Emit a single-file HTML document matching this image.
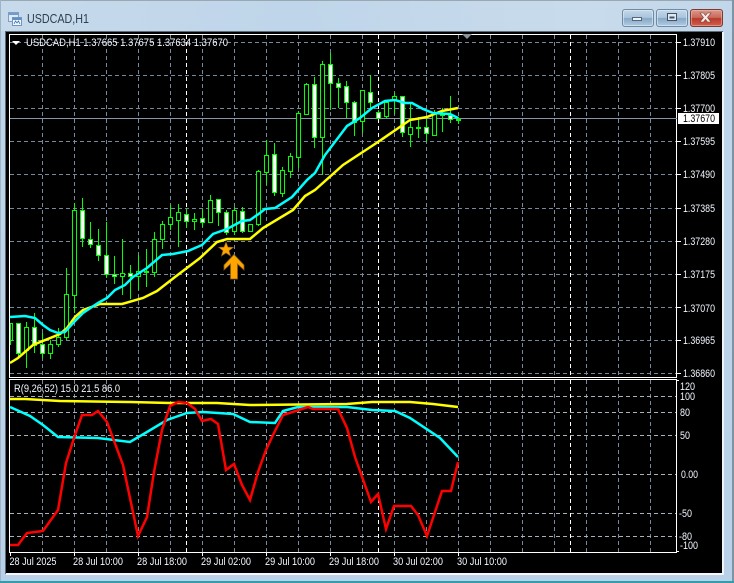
<!DOCTYPE html>
<html>
<head>
<meta charset="utf-8">
<style>
html,body{margin:0;padding:0;background:#b8d1e8;width:734px;height:583px;overflow:hidden}
svg{display:block}
text{font-family:"Liberation Sans",sans-serif;fill:#f2f7ff;font-size:10.8px}
</style>
</head>
<body>
<svg width="734" height="583" viewBox="0 0 734 583" xmlns="http://www.w3.org/2000/svg">
<defs>
<linearGradient id="tb" x1="0" y1="0" x2="0" y2="1"><stop offset="0" stop-color="#bfd5e9"/><stop offset="1" stop-color="#b9d1e8"/></linearGradient>
<linearGradient id="tb2" x1="0" y1="0" x2="1" y2="0"><stop offset="0" stop-color="#fff" stop-opacity=".12"/><stop offset=".4" stop-color="#fff" stop-opacity="0"/><stop offset=".8" stop-color="#fff" stop-opacity=".15"/><stop offset="1" stop-color="#fff" stop-opacity=".03"/></linearGradient>
<linearGradient id="bn" x1="0" y1="0" x2="0" y2="1"><stop offset="0" stop-color="#c6d9ea"/><stop offset=".48" stop-color="#a9c4dc"/><stop offset=".52" stop-color="#86a8c6"/><stop offset="1" stop-color="#b3cde3"/></linearGradient>
<linearGradient id="bc" x1="0" y1="0" x2="0" y2="1"><stop offset="0" stop-color="#dc9a8c"/><stop offset=".48" stop-color="#c9685a"/><stop offset=".52" stop-color="#b83a2a"/><stop offset="1" stop-color="#d4604e"/></linearGradient>
</defs>

<!-- window frame -->
<rect width="734" height="583" fill="url(#tb)"/>
<rect width="734" height="31" fill="url(#tb2)"/>
<rect x="0" y="0" width="734" height="1" fill="#9aa8b2"/>
<rect x="0" y="0" width="1" height="583" fill="#9fb4c5"/>
<rect x="732" y="0" width="2" height="583" fill="#7d94a6"/>
<rect x="0" y="581" width="734" height="2" fill="#2f9fb0"/>

<!-- title icon -->
<g shape-rendering="crispEdges">
<rect x="8.5" y="12.5" width="10" height="9" fill="#dfeaf6" stroke="#7e9fc4"/>
<rect x="9" y="13" width="9" height="2" fill="#6f9bd0"/>
<rect x="12.5" y="17.5" width="9" height="8" fill="#f3f8fd" stroke="#6f95c0"/>
<rect x="13" y="18" width="8" height="2" fill="#5f90cc"/>
</g>
<path d="M14 24l1.5-3 1.5 2 1.5-2 1.5 3" fill="none" stroke="#3a6ea8" stroke-width=".8"/>
<text x="27" y="23" textLength="62" lengthAdjust="spacingAndGlyphs" style="font-size:12.5px;fill:#2c3e50">USDCAD,H1</text>

<!-- window buttons -->
<rect x="622.5" y="9.5" width="31" height="17" rx="2.5" fill="url(#bn)" stroke="#6f8aa3"/>
<rect x="623.5" y="10.5" width="29" height="15" rx="2" fill="none" stroke="#e2edf6" stroke-opacity=".6"/>
<rect x="656.5" y="9.5" width="31" height="17" rx="2.5" fill="url(#bn)" stroke="#6f8aa3"/>
<rect x="657.5" y="10.5" width="29" height="15" rx="2" fill="none" stroke="#e2edf6" stroke-opacity=".6"/>
<rect x="690.5" y="9.5" width="32" height="17" rx="2.5" fill="url(#bc)" stroke="#7c3b32"/>
<rect x="691.5" y="10.5" width="30" height="15" rx="2" fill="none" stroke="#f0c4ba" stroke-opacity=".5"/>
<rect x="632.5" y="17.5" width="9" height="3" fill="#eef3f8" stroke="#55677a" shape-rendering="crispEdges"/>
<rect x="667.5" y="13.5" width="9" height="7" fill="#dfe9f2" stroke="#3f5266" stroke-width="1" shape-rendering="crispEdges"/>
<rect x="669.5" y="16.5" width="5" height="2" fill="#3f5266" shape-rendering="crispEdges"/>
<path d="M700 13h3.5l2 2.5 2-2.5h3.5l-3.5 4.5 3.5 4.5h-3.500l-2-2.500-2 2.500h-3.500l3.500-4.500z" fill="#f2ece9" stroke="#7c3b32" stroke-width=".6"/>

<!-- chart area -->
<rect x="5.5" y="31.5" width="717" height="542" fill="#000" stroke="#5d6b75"/>
<rect x="6" y="573" width="718" height="2" fill="#f3f7fb"/>
<rect x="722" y="32" width="2" height="543" fill="#eef3f8"/>

<!-- grid -->
<g fill="none" stroke="#778899" stroke-width="1" stroke-dasharray="4 3" shape-rendering="crispEdges">
<path d="M10 42.5H676M10 75.5H676M10 108.5H676M10 141.5H676M10 174.5H676M10 208.5H676M10 241.5H676M10 274.5H676M10 307.5H676M10 340.5H676M10 373.5H676"/>
<path d="M42.5 35V377M74.5 35V377M106.5 35V377M138.5 35V377M170.5 35V377M202.5 35V377M234.5 35V377M266.5 35V377M298.5 35V377M330.5 35V377M362.5 35V377M394.5 35V377M426.5 35V377M458.5 35V377M490.5 35V377M522.5 35V377M554.5 35V377M586.5 35V377M618.5 35V377M650.5 35V377"/>
<path d="M42.5 380V552M74.5 380V552M106.5 380V552M138.5 380V552M170.5 380V552M202.5 380V552M234.5 380V552M266.5 380V552M298.5 380V552M330.5 380V552M362.5 380V552M394.5 380V552M426.5 380V552M458.5 380V552M490.5 380V552M522.5 380V552M554.5 380V552M586.5 380V552M618.5 380V552M650.5 380V552"/>
</g>
<g fill="none" stroke="#a8b0b8" stroke-width="1" stroke-dasharray="4 3" shape-rendering="crispEdges">
<path d="M10 396.5H676M10 412.5H676M10 435.5H676M10 474.5H676M10 513.5H676M10 536.5H676"/>
</g>
<g fill="none" stroke="#fff" stroke-width="1" stroke-dasharray="4 3" shape-rendering="crispEdges">
<path d="M186.5 35V377M378.5 35V377M570.5 35V377M186.5 380V552M378.5 380V552M570.5 380V552"/>
</g>

<!-- frames -->
<g fill="none" stroke="#fff" shape-rendering="crispEdges">
<rect x="9.5" y="34.5" width="667" height="343"/>
<rect x="9.5" y="379.5" width="667" height="173"/>
<path d="M677 42.5h4M677 75.5h4M677 108.5h4M677 141.5h4M677 174.5h4M677 208.5h4M677 241.5h4M677 274.5h4M677 307.5h4M677 340.5h4M677 373.5h4"/>
<path d="M677 380.5h2M677 551.5h2"/>
<path d="M10.5 553v3M74.5 553v3M138.5 553v3M202.5 553v3M266.5 553v3M330.5 553v3M394.5 553v3M458.5 553v3"/>
</g>

<!-- price line -->
<rect x="10" y="118" width="667" height="1" fill="#8496a8"/>

<!-- candles: wicks -->
<path fill="none" stroke="#00ff00" stroke-width="1" shape-rendering="crispEdges" d="M10.5 323V345M18.5 323V357M26.5 322V368M34.5 313V353M42.5 333V358M50.5 340V359M58.5 328V347M66.5 268V340M74.5 203V313M82.5 198V247M90.5 222V248M98.5 229V261M106.5 222V278M114.5 256V284M122.5 239V295M130.5 265V299M138.5 255V290M146.5 249V287M154.5 232V277M162.5 221V249M170.5 205V230M178.5 204V247M186.5 209V228M194.5 213V230M202.5 209V227M210.5 195V222M218.5 199V226M226.5 210V235M234.5 207V235M242.5 207V233M250.5 224V231M258.5 170V226M266.5 140V185M274.5 143V196M282.5 167V197M290.5 153V178M298.5 111V168M306.5 83V114M314.5 77V148M322.5 61V175M330.5 53V110M338.5 78V108M346.5 81V118M354.5 101V136M362.5 90V133M370.5 75V108M378.5 110V119M386.5 100V118M394.5 93V114M402.5 96V137M410.5 103V147M418.5 117V138M426.5 118V142M434.5 110V136M442.5 108V132M450.5 96V123M458.5 117V124"/>
<!-- hollow bodies -->
<path fill="#000" stroke="#00ff00" stroke-width="1" shape-rendering="crispEdges" d="M10.5 323.5h2V340.5h-2zM24.5 327.5h4V350.5h-4zM48.5 344.5h4V353.5h-4zM56.5 337.5h4V344.5h-4zM64.5 294.5h4V337.5h-4zM72.5 210.5h4V295.5h-4zM120.5 273.5h4V276.5h-4zM136.5 271.5h4V276.5h-4zM144.5 271.5h4V272.5h-4zM152.5 239.5h4V272.5h-4zM160.5 224.5h4V239.5h-4zM168.5 217.5h4V224.5h-4zM176.5 212.5h4V220.5h-4zM192.5 219.5h4V221.5h-4zM208.5 200.5h4V222.5h-4zM232.5 210.5h4V231.5h-4zM248.5 224.5h4V231.5h-4zM256.5 171.5h4V224.5h-4zM264.5 155.5h4V172.5h-4zM280.5 170.5h4V193.5h-4zM288.5 156.5h4V171.5h-4zM296.5 113.5h4V157.5h-4zM304.5 84.5h4V114.5h-4zM320.5 64.5h4V137.5h-4zM360.5 90.5h4V121.5h-4zM384.5 102.5h4V116.5h-4zM392.5 96.5h4V99.5h-4zM408.5 127.5h4V134.5h-4zM416.5 127.5h4V128.5h-4zM432.5 113.5h4V135.5h-4zM440.5 114.5h4V115.5h-4zM456.5 119.5h4V120.5h-4z"/>
<!-- white bodies -->
<path fill="#fff" stroke="#00ff00" stroke-width="1" shape-rendering="crispEdges" d="M16.5 323.5h4V353.5h-4zM32.5 327.5h4V345.5h-4zM40.5 344.5h4V353.5h-4zM80.5 210.5h4V238.5h-4zM88.5 239.5h4V244.5h-4zM96.5 245.5h4V255.5h-4zM104.5 255.5h4V274.5h-4zM112.5 274.5h4V276.5h-4zM128.5 273.5h4V276.5h-4zM184.5 214.5h4V221.5h-4zM200.5 218.5h4V222.5h-4zM216.5 199.5h4V212.5h-4zM224.5 212.5h4V232.5h-4zM240.5 211.5h4V231.5h-4zM272.5 154.5h4V192.5h-4zM312.5 84.5h4V137.5h-4zM328.5 64.5h4V83.5h-4zM336.5 83.5h4V87.5h-4zM344.5 86.5h4V102.5h-4zM352.5 102.5h4V122.5h-4zM368.5 92.5h4V102.5h-4zM376.5 112.5h4V118.5h-4zM400.5 96.5h4V132.5h-4zM424.5 127.5h4V133.5h-4zM448.5 115.5h4V119.5h-4z"/>

<!-- main MAs -->
<polyline fill="none" stroke="#ffff00" stroke-width="2.5" points="10,363 18,358 33,345 60,334 67,328 75,317 83,310 100,304 122,304 143,298 157,291 175,277 200,258 217,242 227,239 250,239 263,228 288,213 293,210 305,196 315,190 343,165 378,142 410,120 427,117 442,111 458,108"/>
<polyline fill="none" stroke="#00ffff" stroke-width="2.5" points="10,317 25,316 35,318 43,325 50,330 58,333 65,332 74,322 83,313 98,303 107,298 115,290 125,285 133,277 147,268 162,255 173,254 188,251 202,245 213,234 227,229 242,221 250,220 260,213 265,209 275,208 292,197 307,180 315,173 325,155 347,126 360,118 372,108 385,101 395,100 405,103 412,103 423,109 433,113 450,114 458,118"/>

<!-- star + arrow -->
<path d="M226 242l2 5.100 5.400.2-4.300 3.400 1.500 5.300-4.600-3-4.600 3 1.500-5.300-4.300-3.400 5.400-.2z" fill="#ffa500" stroke="#8a5a10" stroke-width=".6"/>
<path d="M234 254.500l10 10.500v5l-6.500-6V279h-7V264l-6.500 6v-5z" fill="#ffa500" stroke="#8a5a10" stroke-width=".8"/>

<!-- indicator lines -->
<polyline fill="none" stroke="#ffff00" stroke-width="2.5" points="10,399 25,399 60,401 130,402 170,403 217,403 250,405 347,404 372,402 410,402 433,404 458,407"/>
<polyline fill="none" stroke="#00ffff" stroke-width="2.5" points="10,407 30,416 43,425 58,437 98,438 130,442 147,432 167,420 187,413 203,412 233,414 250,422 275,423 283,411 298,407 347,407 372,410 395,411 410,418 440,438 458,457"/>
<polyline fill="none" stroke="#ff0000" stroke-width="2.5" points="10,545 18,545 27,533 43,531 58,510 66,463 74,438 82,415 92,415 98,411 107,422 123,465 138,536 147,517 154,472 162,430 170,406 178,402 187,403 195,409 202,421 211,419 218,424 226,470 234,464 242,485 250,500 258,472 266,450 273,435 283,415 308,407 313,409 338,409 347,428 355,457 371,502 378,494 386,529 394,506 411,506 418,515 427,536 442,491 451,491 458,462"/>

<!-- header text -->
<path d="M12 41h8l-4 4z" fill="#fff"/>
<text x="26" y="46" textLength="202" lengthAdjust="spacingAndGlyphs">USDCAD,H1  1.37665 1.37675 1.37634 1.37670</text>
<text x="14" y="392" textLength="106" lengthAdjust="spacingAndGlyphs">R(9,26,52) 15.0 21.5 86.0</text>

<!-- price axis -->
<text x="683" y="46" textLength="32" lengthAdjust="spacingAndGlyphs">1.37910</text>
<text x="683" y="79" textLength="32" lengthAdjust="spacingAndGlyphs">1.37805</text>
<text x="683" y="112" textLength="32" lengthAdjust="spacingAndGlyphs">1.37700</text>
<text x="683" y="145" textLength="32" lengthAdjust="spacingAndGlyphs">1.37595</text>
<text x="683" y="178" textLength="32" lengthAdjust="spacingAndGlyphs">1.37490</text>
<text x="683" y="212" textLength="32" lengthAdjust="spacingAndGlyphs">1.37385</text>
<text x="683" y="245" textLength="32" lengthAdjust="spacingAndGlyphs">1.37280</text>
<text x="683" y="278" textLength="32" lengthAdjust="spacingAndGlyphs">1.37175</text>
<text x="683" y="312" textLength="32" lengthAdjust="spacingAndGlyphs">1.37070</text>
<text x="683" y="344" textLength="32" lengthAdjust="spacingAndGlyphs">1.36965</text>
<text x="683" y="377" textLength="32" lengthAdjust="spacingAndGlyphs">1.36860</text>
<rect x="678" y="113" width="41" height="11" fill="#fff"/>
<text x="683" y="122" textLength="32" lengthAdjust="spacingAndGlyphs" style="fill:#000">1.37670</text>

<!-- indicator axis -->
<text x="680" y="390" textLength="15" lengthAdjust="spacingAndGlyphs">120</text>
<text x="680" y="400" textLength="15" lengthAdjust="spacingAndGlyphs">100</text>
<text x="680" y="416" textLength="10" lengthAdjust="spacingAndGlyphs">80</text>
<text x="680" y="439" textLength="10" lengthAdjust="spacingAndGlyphs">50</text>
<text x="681" y="478" textLength="17" lengthAdjust="spacingAndGlyphs">0.00</text>
<text x="679" y="517" textLength="13" lengthAdjust="spacingAndGlyphs">-50</text>
<text x="679" y="540" textLength="13" lengthAdjust="spacingAndGlyphs">-80</text>
<text x="680" y="549" textLength="18" lengthAdjust="spacingAndGlyphs">-100</text>

<!-- time axis -->
<text x="9.500" y="565" textLength="47" lengthAdjust="spacingAndGlyphs">28 Jul 2025</text>
<text x="73" y="565" textLength="50" lengthAdjust="spacingAndGlyphs">28 Jul 10:00</text>
<text x="137" y="565" textLength="50" lengthAdjust="spacingAndGlyphs">28 Jul 18:00</text>
<text x="201" y="565" textLength="50" lengthAdjust="spacingAndGlyphs">29 Jul 02:00</text>
<text x="265" y="565" textLength="50" lengthAdjust="spacingAndGlyphs">29 Jul 10:00</text>
<text x="329" y="565" textLength="50" lengthAdjust="spacingAndGlyphs">29 Jul 18:00</text>
<text x="393" y="565" textLength="50" lengthAdjust="spacingAndGlyphs">30 Jul 02:00</text>
<text x="457" y="565" textLength="50" lengthAdjust="spacingAndGlyphs">30 Jul 10:00</text>

<!-- top-shift marker -->
<path d="M462 34h10l-5 5z" fill="#8a939c"/>
</svg>
</body>
</html>
